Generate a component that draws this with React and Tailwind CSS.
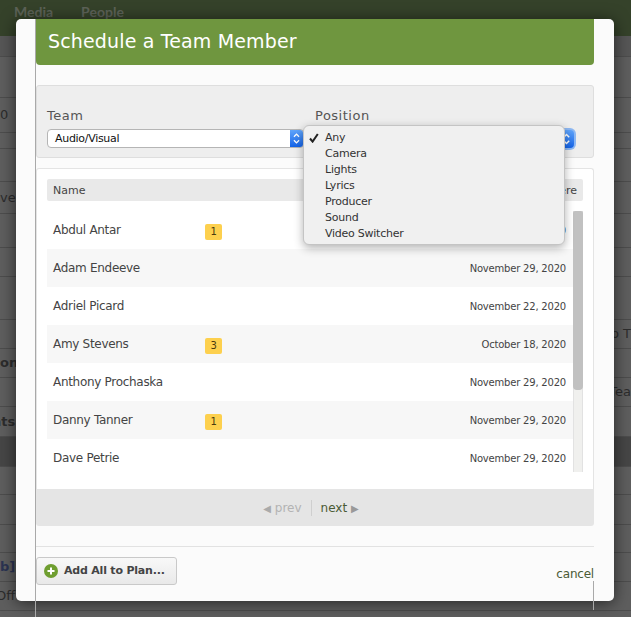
const backdropRows = [
  { h: "h-[41px]" },
  { h: "h-[35px]", left: "0" },
  { h: "h-[16px]" },
  { h: "h-[33px]" },
  { h: "h-[32px]", left: "ve" },
  { h: "h-[34px]" },
  { h: "h-[29px]" },
  { h: "h-[43px]" },
  { h: "h-[29px]", right: "p T" },
  { h: "h-[29px]", left: "on", bold: true },
  { h: "h-[29px]", right: "Tea" },
  { h: "h-[30px]", left: "nts", bold: true, shift: "-ml-[8px]" },
  { h: "h-[30px]", dark: true },
  { h: "h-[28px]" },
  { h: "h-[30px]" },
  { h: "h-[28px]" },
  { h: "h-[29px]", left: "b]", bold: true, blue: true },
  { h: "h-[29px]", left: "Off", shift: "-ml-[4px]" },
  { h: "h-[7px]" },
];

const members = [
  { name: "Abdul Antar", badge: 1, date: "November 29, 2020" },
  { name: "Adam Endeeve", date: "November 29, 2020" },
  { name: "Adriel Picard", date: "November 22, 2020" },
  { name: "Amy Stevens", badge: 3, date: "October 18, 2020" },
  { name: "Anthony Prochaska", date: "November 29, 2020" },
  { name: "Danny Tanner", badge: 1, date: "November 29, 2020" },
  { name: "Dave Petrie", date: "November 29, 2020" },
];

const positions = ["Any", "Camera", "Lights", "Lyrics", "Producer", "Sound", "Video Switcher"];

function SelectArrows({ className }) {
  return (
    <svg viewBox="0 0 13 18" className={className}>
      <path d="M3.8 7.2 6.5 4.4 9.2 7.2" fill="none" stroke="white" strokeWidth="1.4" />
      <path d="M3.8 10.8 6.5 13.6 9.2 10.8" fill="none" stroke="white" strokeWidth="1.4" />
    </svg>
  );
}

function Backdrop() {
  return (
    <div className="h-[617px] overflow-hidden bg-[#5e5e5e] font-['DejaVu_Sans',sans-serif] text-[13px] text-[#2c2c2c]">
      <div className="h-[36px] bg-[#35422a] pl-[14px] pt-[1px] flex gap-[28px] font-['Lato',sans-serif] font-bold text-[14px] text-[#5d6258]">
        <span>Media</span>
        <span>People</span>
      </div>
      <div className="h-[20px] bg-[#565656]" />
      {backdropRows.map((row, i) => (
        <div
          key={i}
          className={`${row.h} flex items-center justify-between border-t border-[#4d4d4d] ${
            row.dark ? "bg-[#464646]" : ""
          }`}
        >
          <span className={`${row.shift || ""} ${row.bold ? "font-bold" : ""} ${row.blue ? "text-[#2b3352]" : ""}`}>
            {row.left}
          </span>
          <span className="whitespace-nowrap">{row.right}</span>
        </div>
      ))}
    </div>
  );
}

function Modal() {
  return (
    <div className="absolute left-[16px] top-[19px] w-[598px] h-[582px] rounded-[5px] bg-[#fbfbfb] px-[20px] shadow-[0_2px_16px_rgba(0,0,0,0.6)] font-['DejaVu_Sans',sans-serif] text-[#444]">
      <div className="h-[46px] rounded-b-[4px] bg-[#6f963f] pl-[12px] pb-[2px] flex items-center text-[19px] tracking-[0.15px] text-white">
        Schedule a Team Member
      </div>

      <div className="relative mt-[20px] h-[73px] rounded-[3px] border border-[#dedede] bg-[#eeeeee] px-[10px] pt-[21px] flex gap-[11px]">
        <div className="w-[257px]">
          <div className="text-[13px] leading-[17px] tracking-[0.5px] text-[#555]">Team</div>
          <div className="mt-[5px] h-[19px] flex rounded-[4px] border border-[#b5b5b5] bg-white overflow-hidden">
            <span className="flex-1 pl-[7px] text-[11px] leading-[17px] tracking-[-0.3px] text-[#111]">Audio/Visual</span>
            <div className="w-[13px] bg-gradient-to-b from-[#5fa4fb] to-[#1263e8]">
              <SelectArrows className="w-[13px] h-[17px]" />
            </div>
          </div>
        </div>
        <div className="w-[261px]">
          <div className="text-[13px] leading-[17px] tracking-[0.5px] text-[#555]">Position</div>
          <div className="mt-[4px] h-[22px] flex justify-end rounded-[6px] bg-[#8db8f3] p-[2px]">
            <div className="w-[14px] rounded-r-[4px] bg-gradient-to-b from-[#5fa4fb] to-[#1263e8]">
              <SelectArrows className="w-[13px] h-[18px]" />
            </div>
          </div>
        </div>

        <div className="absolute left-[266px] top-[39px] w-[262px] h-[120px] z-10 rounded-[6px] border border-[#c4c4c4] bg-[#f0f0f0] pt-[4px] shadow-[0_3px_10px_rgba(0,0,0,0.3)] text-[11px] tracking-[-0.25px] text-[#333]">
          {positions.map((p) => (
            <div key={p} className="relative h-[16px] pl-[21px] leading-[16px]">
              {p === "Any" && (
                <svg viewBox="0 0 10 10" className="absolute left-[5px] top-[3px] w-[10px] h-[10px]">
                  <path d="M1 5.5 3.6 8.6 8.8 1" fill="none" stroke="#222" strokeWidth="2" />
                </svg>
              )}
              {p}
            </div>
          ))}
        </div>
      </div>

      <div className="mt-[10px] rounded-t-[3px] border border-b-0 border-[#e4e4e4] bg-white">
        <div className="pt-[10px] px-[10px]">
          <div className="h-[22px] rounded-[2px] bg-[#e9e9e9] px-[6px] pt-[2px] flex items-center justify-between text-[11px] text-[#444]">
            <span>Name</span>
            <span>Last Scheduled Date Here</span>
          </div>
        </div>
        <div className="mt-[10px] ml-[10px] mr-[10px] h-[261px] overflow-hidden flex">
          <div className="flex-1">
            {members.map((m, i) => (
              <div
                key={m.name}
                className={`h-[38px] pl-[6px] pr-[7px] flex items-center text-[12px] tracking-[-0.3px] ${i % 2 ? "bg-[#f7f7f7]" : "bg-white"}`}
              >
                <span className="w-[152px]">{m.name}</span>
                {m.badge && (
                  <span className="mt-[3px] w-[17px] h-[16px] rounded-[2px] bg-[#fdd04e] text-center text-[10px] leading-[16px] text-[#4a3a10]">
                    {m.badge}
                  </span>
                )}
                <span className="ml-auto text-[10px] tracking-[-0.2px] text-[#444]">{m.date}</span>
              </div>
            ))}
          </div>
          <div className="w-[10px] bg-[#f0f0ee] border-x border-[#e2e2e2]">
            <div className="h-[179px] -mx-px rounded-b-[4px] rounded-t-[2px] bg-[#c1c1c1]" />
          </div>
        </div>
        <div className="h-[17px]" />
      </div>

      <div className="h-[37px] rounded-b-[3px] bg-[#e5e5e5] flex items-center justify-center gap-[9px] pr-[8px] text-[12px]">
        <span className="text-[#b3b3b3]">
          <span className="text-[10px] text-[#aaa]">◀</span> prev
        </span>
        <span className="h-[16px] border-l border-[#cfcfcf]" />
        <span className="text-[#4a5a35]">
          next <span className="text-[10px] text-[#999]">▶</span>
        </span>
      </div>

      <div className="mt-[20px] border-t border-[#e2e2e2] pt-[10px] flex items-start justify-between">
        <button className="h-[28px] w-[141px] rounded-[3px] border border-[#c9c9c9] bg-gradient-to-b from-[#f8f8f8] to-[#e9e9e9] pl-[7px] flex items-center gap-[6px] text-[11px] font-bold tracking-[-0.2px] whitespace-nowrap text-[#444]">
          <svg viewBox="0 0 14 14" className="w-[14px] h-[14px] shrink-0">
            <circle cx="7" cy="7" r="7" fill="#6f9e30" />
            <path d="M7 3.5v7M3.5 7h7" stroke="white" strokeWidth="2" />
          </svg>
          Add All to Plan...
        </button>
        <span className="mt-[8px] text-[12px] tracking-[-0.2px] text-[#4a5a35]">cancel</span>
      </div>
    </div>
  );
}

export default function App() {
  return (
    <div className="relative w-[631px] h-[617px] overflow-hidden">
      <Backdrop />
      <Modal />
      {/* stray guide lines sitting over the dialog edges */}
      <div className="absolute left-[35px] top-[19px] h-[598px] w-px bg-[#a9a9a9]" />
      <div className="absolute left-[593px] top-[581px] h-[29px] w-px bg-[#a9a9a9]" />
    </div>
  );
}
